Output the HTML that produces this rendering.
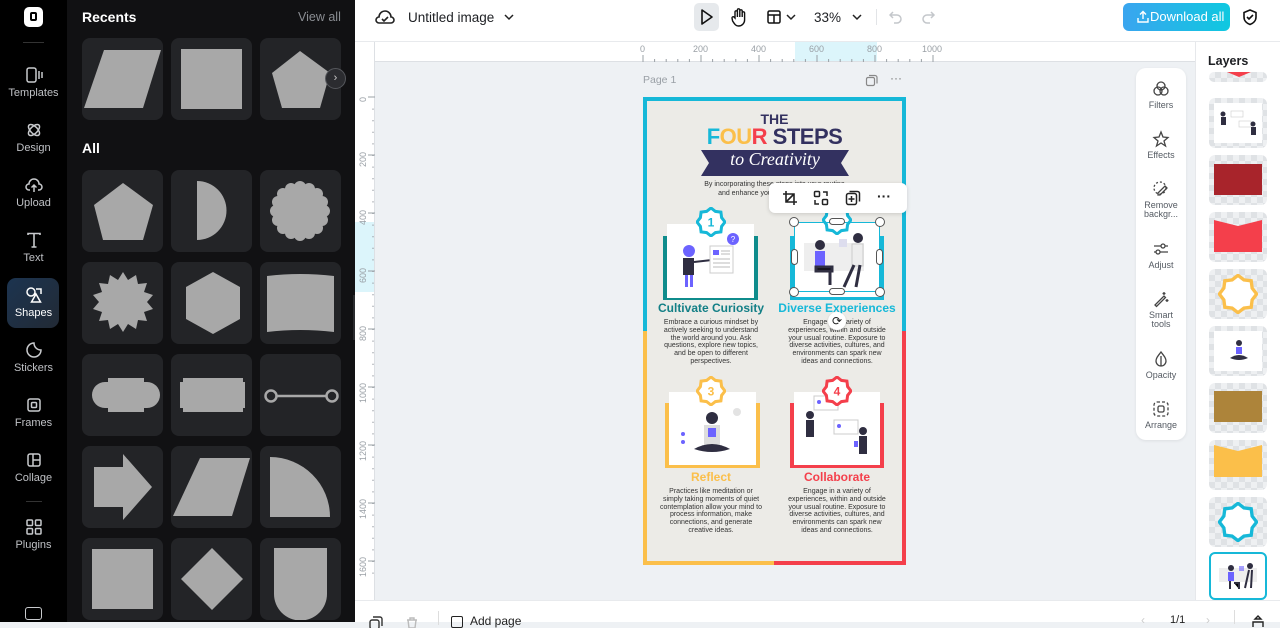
<!DOCTYPE html>
<html><head><meta charset="utf-8">
<style>
*{box-sizing:border-box;margin:0;padding:0}
body{width:1280px;height:622px;overflow:hidden;position:relative;font-family:"Liberation Sans",sans-serif;background:#eef1f4}
.abs{position:absolute}
#rail{left:0;top:0;width:67px;height:622px;background:#000}
.ri{position:absolute;left:0;width:67px;text-align:center;color:#bfc1c5;font-size:11px}
.ri svg{display:block;margin:0 auto 3px}
#panel{left:67px;top:0;width:288px;height:622px;background:#111113}
.tile{position:absolute;width:81px;height:82px;background:#232427;border-radius:8px}
.tile svg{position:absolute;left:0;top:0}
#top{left:355px;top:0;width:925px;height:42px;background:#fff;border-bottom:1px solid #e8eaed}
#hr{left:375px;top:42px;width:820px;height:20px;background:#fff;border-bottom:1px solid #dde0e4}
#vr{left:355px;top:42px;width:20px;height:558px;background:#fff;border-right:1px solid #dde0e4}
.lbl{position:absolute;font-size:9px;color:#9aa0a6}
#tools{left:1136px;top:68px;width:50px;height:372px;background:#fff;border-radius:10px;box-shadow:0 1px 3px rgba(0,0,0,.08)}
.tl{position:absolute;left:0;width:50px;text-align:center;font-size:9px;color:#555b63;line-height:9px}
.tl svg{display:block;margin:0 auto 3px}
#layers{left:1195px;top:42px;width:85px;height:558px;background:#fff;border-left:1px solid #e6e8eb}
.lay{position:absolute;left:13px;width:58px;height:50px;border-radius:6px;background:#e9ecef;overflow:hidden}
.chk{background-color:#eef0f2;background-image:linear-gradient(45deg,#dfe2e5 25%,transparent 25%,transparent 75%,#dfe2e5 75%),linear-gradient(45deg,#dfe2e5 25%,transparent 25%,transparent 75%,#dfe2e5 75%);background-size:12px 12px;background-position:0 0,6px 6px}
#bot{left:355px;top:600px;width:925px;height:22px;background:#fff;border-top:1px solid #e8eaed}
.pg{font-family:"Liberation Sans",sans-serif}
.body{position:absolute;font-size:7px;line-height:7.8px;color:#333;text-align:center;width:104px}
.ttl{position:absolute;font-weight:bold;font-size:12px;text-align:center;width:130px}
</style></head><body>

<div id="rail" class="abs">
  <div class="abs" style="left:24px;top:7px;width:19px;height:20px;background:#fff;border-radius:5px"><div style="position:absolute;left:6px;top:5px;width:7px;height:9px;border:2px solid #000;border-radius:2px"></div></div>
  <div class="abs" style="left:23px;top:42px;width:21px;height:1px;background:#333"></div>
  <div class="ri" style="top:66px"><svg width="18" height="18" viewBox="0 0 18 18" fill="none" stroke="#c8cacd" stroke-width="1.5"><rect x="2" y="2" width="9" height="14" rx="2"/><path d="M14 5v8M17 6v6"/></svg>Templates</div>
  <div class="ri" style="top:121px"><svg width="18" height="18" viewBox="0 0 18 18" fill="none" stroke="#c8cacd" stroke-width="1.5"><ellipse cx="9" cy="9" rx="7" ry="3.5" transform="rotate(45 9 9)"/><ellipse cx="9" cy="9" rx="7" ry="3.5" transform="rotate(-45 9 9)"/></svg>Design</div>
  <div class="ri" style="top:176px"><svg width="18" height="18" viewBox="0 0 18 18" fill="none" stroke="#c8cacd" stroke-width="1.5"><path d="M5 14H4a3 3 0 0 1 0-6 5 5 0 0 1 10 0 3 3 0 0 1 0 6h-1M9 16V9M6.5 11.5 9 9l2.5 2.5"/></svg>Upload</div>
  <div class="ri" style="top:231px"><svg width="18" height="18" viewBox="0 0 18 18" fill="none" stroke="#c8cacd" stroke-width="1.6"><path d="M3 4V2.5h12V4M9 2.5V16M6.5 16h5"/></svg>Text</div>
  <div class="abs" style="left:7px;top:278px;width:52px;height:50px;border-radius:9px;background:linear-gradient(135deg,#1c3450,#222a35)"></div>
  <div class="ri" style="top:286px;color:#fff"><svg width="18" height="18" viewBox="0 0 18 18" fill="none" stroke="#fff" stroke-width="1.5"><circle cx="6" cy="6" r="4"/><path d="M11 3h5v5M11 8l-4.5 8h9z"/></svg>Shapes</div>
  <div class="ri" style="top:341px"><svg width="18" height="18" viewBox="0 0 18 18" fill="none" stroke="#c8cacd" stroke-width="1.5"><path d="M16 9a7 7 0 1 1-7-7c0 4 3 7 7 7z"/></svg>Stickers</div>
  <div class="ri" style="top:396px"><svg width="18" height="18" viewBox="0 0 18 18" fill="none" stroke="#c8cacd" stroke-width="1.5"><rect x="3" y="3" width="12" height="12" rx="2"/><rect x="6.5" y="6.5" width="5" height="5" rx="1"/></svg>Frames</div>
  <div class="ri" style="top:451px"><svg width="18" height="18" viewBox="0 0 18 18" fill="none" stroke="#c8cacd" stroke-width="1.5"><rect x="3" y="3" width="12" height="12" rx="2"/><path d="M8 3v12M8 9h7"/></svg>Collage</div>
  <div class="abs" style="left:26px;top:501px;width:16px;height:1px;background:#333"></div>
  <div class="ri" style="top:518px"><svg width="18" height="18" viewBox="0 0 18 18" fill="none" stroke="#c8cacd" stroke-width="1.5"><rect x="2" y="2" width="5.5" height="5.5" rx="1"/><rect x="10.5" y="2" width="5.5" height="5.5" rx="1"/><rect x="2" y="10.5" width="5.5" height="5.5" rx="1"/><rect x="10.5" y="10.5" width="5.5" height="5.5" rx="1"/></svg>Plugins</div>
  <div class="abs" style="left:25px;top:607px;width:17px;height:13px;border:1.5px solid #c8cacd;border-radius:3px"></div>
</div>

<div id="panel" class="abs">
  <div class="abs" style="left:15px;top:9px;color:#fff;font-weight:bold;font-size:14px">Recents</div>
  <div class="abs" style="left:231px;top:10px;color:#8a8d92;font-size:12.5px">View all</div>
  <div class="abs" style="left:15px;top:140px;color:#fff;font-weight:bold;font-size:14px">All</div>
</div>
<div class="tile" style="left:82px;top:38px"><svg width="81" height="82"><polygon points="22,12 79,12 61,70 2,70" fill="#a8a8a8"/></svg></div>
<div class="tile" style="left:171px;top:38px"><svg width="81" height="82"><rect x="10" y="11" width="61" height="60" fill="#a8a8a8"/></svg></div>
<div class="tile" style="left:260px;top:38px"><svg width="81" height="82"><polygon points="40,13 70,35 60,70 22,70 12,35" fill="#a8a8a8"/></svg></div>
<div class="abs" style="left:325px;top:68px;width:21px;height:21px;border-radius:50%;background:#2b2c30;border:1px solid #55575c;color:#ccc;font-size:11px;text-align:center;line-height:19px">&#8250;</div>

<div class="tile" style="left:82px;top:170px"><svg width="81" height="82"><polygon points="41,13 71,35 61,70 21,70 12,35" fill="#a8a8a8"/></svg></div>
<div class="tile" style="left:171px;top:170px"><svg width="81" height="82"><path d="M26 11a29 29 0 0 1 0 59z" fill="#a8a8a8"/></svg></div>
<div class="tile" style="left:260px;top:170px"><svg width="81" height="82"><g fill="#a8a8a8"><circle cx="40" cy="41" r="24"/><circle cx="40" cy="17" r="6"/><circle cx="40" cy="65" r="6"/><circle cx="16" cy="41" r="6"/><circle cx="64" cy="41" r="6"/><circle cx="57" cy="24" r="6"/><circle cx="23" cy="24" r="6"/><circle cx="57" cy="58" r="6"/><circle cx="23" cy="58" r="6"/><circle cx="49" cy="19" r="6"/><circle cx="31" cy="19" r="6"/><circle cx="49" cy="63" r="6"/><circle cx="31" cy="63" r="6"/><circle cx="18" cy="32" r="6"/><circle cx="62" cy="32" r="6"/><circle cx="18" cy="50" r="6"/><circle cx="62" cy="50" r="6"/></g></svg></div>

<div class="tile" style="left:82px;top:262px"><svg width="81" height="82"><polygon points="41,10 46,18 54,13 56,22 65,21 62,30 71,33 65,40 71,47 62,50 65,59 56,58 54,67 46,62 41,70 36,62 28,67 26,58 17,59 20,50 11,47 17,40 11,33 20,30 17,21 26,22 28,13 36,18" fill="#a8a8a8"/></svg></div>
<div class="tile" style="left:171px;top:262px"><svg width="81" height="82"><polygon points="42,10 69,25 69,57 42,72 15,57 15,25" fill="#a8a8a8"/></svg></div>
<div class="tile" style="left:260px;top:262px"><svg width="81" height="82"><path d="M7 14 Q40 10 74 14 V70 Q40 66 7 70z" fill="#a8a8a8"/></svg></div>

<div class="tile" style="left:82px;top:354px"><svg width="81" height="82"><path d="M26 24h36v4h3a13 13 0 0 1 0 26h-3v4H26v-4h-3a13 13 0 0 1 0-26h3z" fill="#a8a8a8"/></svg></div>
<div class="tile" style="left:171px;top:354px"><svg width="81" height="82"><path d="M12 24h60v4h2v26h-2v4H12v-4h-3V28h3z" fill="#a8a8a8"/></svg></div>
<div class="tile" style="left:260px;top:354px"><svg width="81" height="82"><g fill="none" stroke="#a8a8a8" stroke-width="2.5"><circle cx="11" cy="42" r="5.5"/><circle cx="72" cy="42" r="5.5"/><path d="M16.5 42h50"/></g></svg></div>

<div class="tile" style="left:82px;top:446px"><svg width="81" height="82"><polygon points="12,21 41,21 41,8 70,41 41,74 41,61 12,61" fill="#a8a8a8"/></svg></div>
<div class="tile" style="left:171px;top:446px"><svg width="81" height="82"><polygon points="29,12 79,12 61,70 2,70" fill="#a8a8a8"/></svg></div>
<div class="tile" style="left:260px;top:446px"><svg width="81" height="82"><path d="M10 11a60 60 0 0 1 60 60H10z" fill="#a8a8a8"/></svg></div>

<div class="tile" style="left:82px;top:538px"><svg width="81" height="82"><rect x="10" y="11" width="61" height="60" fill="#a8a8a8"/></svg></div>
<div class="tile" style="left:171px;top:538px"><svg width="81" height="82"><polygon points="41,10 72,41 41,72 10,41" fill="#a8a8a8"/></svg></div>
<div class="tile" style="left:260px;top:538px"><svg width="81" height="82"><path d="M14 10h53v46a26.5 26.5 0 0 1-53 0z" fill="#a8a8a8"/></svg></div>
<div class="abs" style="left:353px;top:295px;width:8px;height:45px;background:#2a2b2e;border-radius:0 4px 4px 0"></div>

<div id="top" class="abs">
  <svg class="abs" style="left:20px;top:8px" width="20" height="18" viewBox="0 0 20 18" fill="none" stroke="#222" stroke-width="1.6"><path d="M5 15H4a3 3 0 0 1 0-6 6 6 0 0 1 12 0 3 3 0 0 1 0 6H5z"/><path d="M7 11l2 2 4-4"/></svg>
  <div class="abs" style="left:53px;top:10px;font-size:13.5px;color:#1d1f23">Untitled image</div>
  <svg class="abs" style="left:148px;top:12px" width="12" height="10"><path d="M2 3l4 4 4-4" fill="none" stroke="#222" stroke-width="1.5"/></svg>
  <div class="abs" style="left:339px;top:3px;width:25px;height:28px;background:#e6e9ec;border-radius:5px"></div>
  <svg class="abs" style="left:345px;top:8px" width="14" height="18"><path d="M2 2l10 7-10 7z" fill="none" stroke="#111" stroke-width="1.6" stroke-linejoin="round"/></svg>
  <svg class="abs" style="left:375px;top:7px" width="18" height="20" viewBox="0 0 18 20" fill="none" stroke="#111" stroke-width="1.4"><path d="M5 11V5a1.2 1.2 0 0 1 2.4 0v5V3a1.2 1.2 0 0 1 2.4 0v7V4a1.2 1.2 0 0 1 2.4 0v6-4a1.2 1.2 0 0 1 2.4 0v7a6 6 0 0 1-6 6c-3 0-4-2-6-5L2 11a1.2 1.2 0 0 1 2-1z"/></svg>
  <svg class="abs" style="left:411px;top:9px" width="16" height="16" fill="none" stroke="#111" stroke-width="1.5"><rect x="2" y="2" width="12" height="12" rx="1.5"/><path d="M2 6h12M8 6v8"/></svg>
  <svg class="abs" style="left:430px;top:12px" width="12" height="10"><path d="M2 3l4 4 4-4" fill="none" stroke="#222" stroke-width="1.5"/></svg>
  <div class="abs" style="left:459px;top:10px;font-size:13.5px;color:#1d1f23">33%</div>
  <svg class="abs" style="left:496px;top:12px" width="12" height="10"><path d="M2 3l4 4 4-4" fill="none" stroke="#222" stroke-width="1.5"/></svg>
  <div class="abs" style="left:521px;top:9px;width:1px;height:16px;background:#e2e4e7"></div>
  <svg class="abs" style="left:533px;top:9px" width="16" height="16" fill="none" stroke="#c4c7cb" stroke-width="1.5"><path d="M5 3L2 6l3 3M2 6h7a4 4 0 0 1 0 8H6"/></svg>
  <svg class="abs" style="left:565px;top:9px" width="16" height="16" fill="none" stroke="#c4c7cb" stroke-width="1.5"><path d="M11 3l3 3-3 3M14 6H7a4 4 0 0 0 0 8h3"/></svg>
  <div class="abs" style="left:768px;top:3px;width:107px;height:28px;border-radius:6px;background:linear-gradient(90deg,#3aa5ef,#0fc8e0);color:#fff;font-size:13px;line-height:28px;padding-left:27px">Download all</div>
  <svg class="abs" style="left:781px;top:10px" width="14" height="14" fill="none" stroke="#fff" stroke-width="1.4"><path d="M7 9V2M4 4.5 7 1.5l3 3M2 8v4h10V8"/></svg>
  <svg class="abs" style="left:886px;top:8px" width="18" height="18" fill="none" stroke="#111" stroke-width="1.6"><path d="M9 2l6 2.5v4.5c0 4-3 6.5-6 7.5-3-1-6-3.5-6-7.5V4.5z"/><path d="M6 9l2 2 4-4"/></svg>
</div>

<div id="hr" class="abs">
  <div class="abs" style="left:420px;top:0;width:82px;height:19px;background:#dcf5fb"></div>
  <svg class="abs" style="left:0;top:0" width="820" height="20"><g stroke="#9aa0a6" stroke-width="1">
  <path d="M268 13v7M326 13v7M384 13v7M442 13v7M500 13v7M558 13v7"/>
  <path d="M279.6 17v3M291.2 17v3M302.8 17v3M314.4 17v3M337.6 17v3M349.2 17v3M360.8 17v3M372.4 17v3M395.6 17v3M407.2 17v3M418.8 17v3M430.4 17v3M453.6 17v3M465.2 17v3M476.8 17v3M488.4 17v3M511.6 17v3M523.2 17v3M534.8 17v3M546.4 17v3"/></g></svg>
  <div class="lbl" style="left:265px;top:2px">0</div><div class="lbl" style="left:318px;top:2px">200</div><div class="lbl" style="left:376px;top:2px">400</div><div class="lbl" style="left:434px;top:2px">600</div><div class="lbl" style="left:492px;top:2px">800</div><div class="lbl" style="left:547px;top:2px">1000</div>
</div>
<div id="vr" class="abs">
  <div class="abs" style="left:0;top:180px;width:19px;height:70px;background:#dcf5fb"></div>
  <svg class="abs" style="left:0;top:0" width="20" height="558"><g stroke="#9aa0a6"><path d="M13 55h7M13 113h7M13 171h7M13 229h7M13 287h7M13 345h7M13 403h7M13 461h7M13 519h7"/></g><g stroke="#9aa0a6" stroke-dasharray="1 10.6"><path d="M18 66.6V540" stroke-width="1.5"/></g></svg>
  <div class="lbl" style="left:3px;top:60px;transform:rotate(-90deg);transform-origin:0 0">0</div>
  <div class="lbl" style="left:3px;top:125px;transform:rotate(-90deg);transform-origin:0 0">200</div>
  <div class="lbl" style="left:3px;top:183px;transform:rotate(-90deg);transform-origin:0 0">400</div>
  <div class="lbl" style="left:3px;top:241px;transform:rotate(-90deg);transform-origin:0 0">600</div>
  <div class="lbl" style="left:3px;top:299px;transform:rotate(-90deg);transform-origin:0 0">800</div>
  <div class="lbl" style="left:3px;top:361px;transform:rotate(-90deg);transform-origin:0 0">1000</div>
  <div class="lbl" style="left:3px;top:419px;transform:rotate(-90deg);transform-origin:0 0">1200</div>
  <div class="lbl" style="left:3px;top:477px;transform:rotate(-90deg);transform-origin:0 0">1400</div>
  <div class="lbl" style="left:3px;top:535px;transform:rotate(-90deg);transform-origin:0 0">1600</div>
</div>

<div class="abs" style="left:643px;top:74px;font-size:10.5px;color:#9aa0a6">Page 1</div>
<svg class="abs" style="left:865px;top:74px" width="13" height="13" fill="none" stroke="#888" stroke-width="1.2"><rect x="1.5" y="3.5" width="8" height="8" rx="1.5"/><path d="M4 1.5h6a2 2 0 0 1 2 2v6"/></svg>
<div class="abs" style="left:890px;top:71px;font-size:12px;color:#777">&middot;&middot;&middot;</div>

<div class="abs pg" style="left:643px;top:97px;width:263px;height:468px;background:#ecebe7;overflow:hidden">
  <div class="abs" style="left:0;top:0;width:263px;height:234px;border:4px solid #16b8d8;border-bottom:none"></div>
  <div class="abs" style="left:0;top:234px;width:131px;height:234px;border:4px solid #fbbf4a;border-top:none;border-right:none"></div>
  <div class="abs" style="left:131px;top:234px;width:132px;height:234px;border:4px solid #f43f4b;border-top:none;border-left:none"></div>
  <div class="abs" style="left:0;top:14px;width:263px;text-align:center;font-weight:bold;font-size:14px;color:#333160">THE</div>
  <div class="abs" style="left:0;top:27px;width:263px;text-align:center;font-weight:bold;font-size:22px;letter-spacing:-0.5px;color:#333160"><span style="color:#16b8d8">F</span><span style="color:#fbbf4a">O</span><span style="color:#fbbf4a">U</span><span style="color:#f43f4b">R</span> STEPS</div>
  <svg class="abs" style="left:58px;top:52px" width="148" height="28"><polygon points="0,1 148,1 140,14 148,27 0,27 8,14" fill="#333160"/></svg>
  <div class="abs" style="left:58px;top:52px;width:148px;text-align:center;font-family:'Liberation Serif',serif;font-style:italic;font-size:18px;color:#fff">to Creativity</div>
  <div class="abs" style="left:20px;top:84px;width:223px;text-align:center;font-size:7px;line-height:8.5px;color:#333">By incorporating these steps into your routine<br>and enhance your creative potential.</div>

  <div class="abs" style="left:20px;top:139px;width:95px;height:64px;background:#0f8c8c"></div>
  <div class="abs" style="left:24px;top:127px;width:87px;height:74px;background:#fff"></div>
  <div class="abs" style="left:147px;top:139px;width:94px;height:64px;background:#16b8d8"></div>
  <div class="abs" style="left:151px;top:126px;width:86px;height:74px;background:#fff"></div>
  <div class="abs" style="left:22px;top:306px;width:95px;height:65px;background:#fbbf4a"></div>
  <div class="abs" style="left:26px;top:295px;width:87px;height:73px;background:#fff"></div>
  <div class="abs" style="left:147px;top:306px;width:94px;height:65px;background:#f43f4b"></div>
  <div class="abs" style="left:151px;top:295px;width:86px;height:73px;background:#fff"></div>
  <svg class="abs" style="left:24px;top:127px" width="87" height="74"><circle cx="22" cy="27" r="6" fill="#6c63ff"/><path d="M16 34h11v17H16z" fill="#2f2e41"/><path d="M18 51h3v12h-3zM23 51h3v12h-3z" fill="#6c63ff"/><path d="M27 38l18-2" stroke="#2f2e41" stroke-width="2"/><rect x="43" y="22" width="23" height="27" fill="#fff" stroke="#ccc"/><rect x="46" y="26" width="6" height="5" fill="#6c63ff"/><path d="M54 27h9M54 30h9M46 35h17M46 39h17M46 43h17" stroke="#bbb"/><circle cx="66" cy="15" r="6" fill="#6c63ff"/><text x="66" y="18" font-size="8" fill="#fff" text-anchor="middle" font-family="Liberation Sans">?</text></svg>
  <svg class="abs" style="left:151px;top:126px" width="86" height="74"><rect x="10" y="20" width="60" height="28" fill="#eee"/><circle cx="26" cy="22" r="5" fill="#2f2e41"/><path d="M21 28h10v16H21z" fill="#6c63ff"/><path d="M22 44h16v4H22zM36 48v14" stroke="#2f2e41" stroke-width="3"/><circle cx="64" cy="15" r="5" fill="#2f2e41"/><path d="M58 21h11v22H58z" fill="#eee" stroke="#ccc"/><path d="M60 42l-10 22M66 42l-4 22" stroke="#2f2e41" stroke-width="3"/><rect x="45" y="16" width="8" height="8" fill="#dde"/></svg>
  <svg class="abs" style="left:26px;top:295px" width="87" height="73"><circle cx="43" cy="26" r="6" fill="#2f2e41"/><path d="M35 33h16v20H35z" fill="#ddd"/><rect x="39" y="36" width="8" height="9" fill="#6c63ff"/><path d="M25 57q18-10 36 0q-18 6-36 0z" fill="#2f2e41"/><circle cx="68" cy="20" r="4" fill="#e3e3e3"/><circle cx="14" cy="42" r="2" fill="#6c63ff"/><circle cx="14" cy="50" r="2" fill="#6c63ff"/></svg>
  <svg class="abs" style="left:151px;top:295px" width="86" height="73"><rect x="20" y="4" width="24" height="14" fill="#fff" stroke="#ccc"/><circle cx="25" cy="10" r="2" fill="#6c63ff"/><rect x="40" y="28" width="24" height="14" fill="#fff" stroke="#ccc"/><circle cx="45" cy="34" r="2" fill="#6c63ff"/><circle cx="16" cy="23" r="4" fill="#2f2e41"/><path d="M12 28h8v17h-8z" fill="#2f2e41"/><circle cx="69" cy="39" r="4" fill="#2f2e41"/><path d="M65 44h8v18h-8z" fill="#2f2e41"/><rect x="60" y="49" width="4" height="6" fill="#6c63ff"/></svg>
  <svg class="abs" style="left:53px;top:110px" width="30" height="30"><polygon points="29,15 25.6,19.4 24.9,24.9 19.4,25.6 15,29 10.6,25.6 5.1,24.9 4.4,19.4 1,15 4.4,10.6 5.1,5.1 10.6,4.4 15,1 19.4,4.4 24.9,5.1 25.6,10.6" fill="#fff" stroke="#16b8d8" stroke-width="3"/><text x="15" y="19.5" font-size="12" font-weight="bold" fill="#16b8d8" text-anchor="middle" font-family="Liberation Sans">1</text></svg>
  <svg class="abs" style="left:179px;top:108px" width="30" height="30"><polygon points="29,15 25.6,19.4 24.9,24.9 19.4,25.6 15,29 10.6,25.6 5.1,24.9 4.4,19.4 1,15 4.4,10.6 5.1,5.1 10.6,4.4 15,1 19.4,4.4 24.9,5.1 25.6,10.6" fill="#fff" stroke="#16b8d8" stroke-width="3"/></svg>
  <svg class="abs" style="left:53px;top:279px" width="30" height="30"><polygon points="29,15 25.6,19.4 24.9,24.9 19.4,25.6 15,29 10.6,25.6 5.1,24.9 4.4,19.4 1,15 4.4,10.6 5.1,5.1 10.6,4.4 15,1 19.4,4.4 24.9,5.1 25.6,10.6" fill="#fff" stroke="#fbbf4a" stroke-width="3"/><text x="15" y="19.5" font-size="12" font-weight="bold" fill="#fbbf4a" text-anchor="middle" font-family="Liberation Sans">3</text></svg>
  <svg class="abs" style="left:179px;top:279px" width="30" height="30"><polygon points="29,15 25.6,19.4 24.9,24.9 19.4,25.6 15,29 10.6,25.6 5.1,24.9 4.4,19.4 1,15 4.4,10.6 5.1,5.1 10.6,4.4 15,1 19.4,4.4 24.9,5.1 25.6,10.6" fill="#fff" stroke="#f43f4b" stroke-width="3"/><text x="15" y="19.5" font-size="12" font-weight="bold" fill="#f43f4b" text-anchor="middle" font-family="Liberation Sans">4</text></svg>

  <div class="ttl" style="left:3px;top:204px;color:#137f86">Cultivate Curiosity</div>
  <div class="ttl" style="left:129px;top:204px;color:#16b8d8">Diverse Experiences</div>
  <div class="ttl" style="left:3px;top:373px;color:#fbbf4a">Reflect</div>
  <div class="ttl" style="left:129px;top:373px;color:#f43f4b">Collaborate</div>
  <div class="body" style="left:16px;top:222px">Embrace a curious mindset by actively seeking to understand the world around you. Ask questions, explore new topics, and be open to different perspectives.</div>
  <div class="body" style="left:142px;top:222px">Engage in a variety of experiences, within and outside your usual routine. Exposure to diverse activities, cultures, and environments can spark new ideas and connections.</div>
  <div class="body" style="left:16px;top:391px">Practices like meditation or simply taking moments of quiet contemplation allow your mind to process information, make connections, and generate creative ideas.</div>
  <div class="body" style="left:142px;top:391px">Engage in a variety of experiences, within and outside your usual routine. Exposure to diverse activities, cultures, and environments can spark new ideas and connections.</div>
</div>

<div class="abs" style="left:794px;top:222px;width:86px;height:70px;border:1.5px solid #16b8d8"></div>
<div class="abs" style="left:789px;top:217px;width:10px;height:10px;border-radius:50%;background:#fff;border:1px solid #555"></div>
<div class="abs" style="left:875px;top:217px;width:10px;height:10px;border-radius:50%;background:#fff;border:1px solid #555"></div>
<div class="abs" style="left:789px;top:287px;width:10px;height:10px;border-radius:50%;background:#fff;border:1px solid #555"></div>
<div class="abs" style="left:875px;top:287px;width:10px;height:10px;border-radius:50%;background:#fff;border:1px solid #555"></div>
<div class="abs" style="left:829px;top:218px;width:16px;height:7px;border-radius:4px;background:#fff;border:1px solid #555"></div>
<div class="abs" style="left:829px;top:288px;width:16px;height:7px;border-radius:4px;background:#fff;border:1px solid #555"></div>
<div class="abs" style="left:791px;top:249px;width:7px;height:16px;border-radius:4px;background:#fff;border:1px solid #555"></div>
<div class="abs" style="left:876px;top:249px;width:7px;height:16px;border-radius:4px;background:#fff;border:1px solid #555"></div>
<div class="abs" style="left:828px;top:312px;width:18px;height:18px;border-radius:50%;background:#fff;box-shadow:0 1px 2px rgba(0,0,0,.2);text-align:center;font-size:12px;line-height:18px;color:#222">&#10227;</div>

<div class="abs" style="left:769px;top:183px;width:138px;height:30px;background:#fff;border-radius:6px;box-shadow:0 1px 4px rgba(0,0,0,.15)">
  <svg class="abs" style="left:13px;top:7px" width="16" height="16" fill="none" stroke="#222" stroke-width="1.6"><path d="M4 1v11h11M1 4h11v11M4 12l8-8"/></svg>
  <svg class="abs" style="left:44px;top:7px" width="16" height="16" fill="none" stroke="#222" stroke-width="1.5"><rect x="1.5" y="1.5" width="5" height="5" rx="1"/><rect x="9.5" y="9.5" width="5" height="5" rx="1"/><path d="M10 2h4v4M2 10v4h4"/></svg>
  <svg class="abs" style="left:76px;top:7px" width="16" height="16" fill="none" stroke="#222" stroke-width="1.5"><rect x="1.5" y="3.5" width="10" height="11" rx="2"/><path d="M4.5 1.5h8a2 2 0 0 1 2 2v8M6.5 6v6M3.5 9h6"/></svg>
  <div class="abs" style="left:108px;top:5px;font-size:14px;color:#222;font-weight:bold">&middot;&middot;&middot;</div>
</div>

<div id="tools" class="abs">
  <div class="tl" style="top:12px"><svg width="18" height="18" fill="none" stroke="#444" stroke-width="1.3"><circle cx="9" cy="6" r="4"/><circle cx="6" cy="11" r="4"/><circle cx="12" cy="11" r="4"/></svg>Filters</div>
  <div class="tl" style="top:62px"><svg width="18" height="18" fill="none" stroke="#444" stroke-width="1.3"><path d="M9 2l2 5 5 .5-4 3.5 1.5 5L9 13l-4.5 3 1.5-5-4-3.5 5-.5z"/></svg>Effects</div>
  <div class="tl" style="top:112px"><svg width="18" height="18" fill="none" stroke="#444" stroke-width="1.3"><circle cx="8" cy="8" r="6" stroke-dasharray="2 2"/><path d="M6 13l7-7 2 2-7 7h-2z"/></svg>Remove<br>backgr...</div>
  <div class="tl" style="top:172px"><svg width="18" height="18" fill="none" stroke="#444" stroke-width="1.3"><path d="M2 6h14M2 12h14"/><circle cx="11" cy="6" r="2" fill="#fff"/><circle cx="6" cy="12" r="2" fill="#fff"/></svg>Adjust</div>
  <div class="tl" style="top:222px"><svg width="18" height="18" fill="none" stroke="#444" stroke-width="1.3"><path d="M3 15l9-9 1.5 1.5-9 9zM12 2v3M10.5 3.5h3M15 9v3M13.5 10.5h3"/></svg>Smart<br>tools</div>
  <div class="tl" style="top:282px"><svg width="18" height="18" fill="none" stroke="#444" stroke-width="1.3"><path d="M9 2c3 4 5 6 5 9a5 5 0 0 1-10 0c0-3 2-5 5-9zM9 6v10"/></svg>Opacity</div>
  <div class="tl" style="top:332px"><svg width="18" height="18" fill="none" stroke="#444" stroke-width="1.3"><rect x="2" y="2" width="14" height="14" rx="3" stroke-dasharray="3 2"/><rect x="6" y="6" width="6" height="6" rx="1.5"/></svg>Arrange</div>
</div>

<div id="layers" class="abs">
  <div class="abs" style="left:12px;top:12px;font-weight:bold;font-size:12.5px;color:#1d1f23">Layers</div>
  <div class="lay chk" style="top:30px;height:10px"><div style="position:absolute;left:18px;top:0;width:0;height:0;border-left:12px solid transparent;border-right:12px solid transparent;border-top:5px solid #f43f4b"></div></div>
  <div class="lay chk" style="top:56px"><div style="position:absolute;left:5px;top:5px;width:48px;height:40px;background:#fff"></div><svg style="position:absolute;left:8px;top:10px" width="42" height="30"><circle cx="6" cy="6" r="2.5" fill="#2f2e41"/><rect x="4" y="9" width="5" height="8" fill="#2f2e41"/><rect x="14" y="3" width="12" height="6" fill="#fff" stroke="#ccc" stroke-width=".6"/><rect x="22" y="13" width="12" height="6" fill="#fff" stroke="#ccc" stroke-width=".6"/><circle cx="36" cy="16" r="2.5" fill="#2f2e41"/><rect x="34" y="19" width="5" height="8" fill="#2f2e41"/></svg></div>
  <div class="lay chk" style="top:113px"><div style="position:absolute;left:5px;top:9px;width:48px;height:31px;background:#a8242b"></div></div>
  <div class="lay chk" style="top:170px"><svg style="position:absolute;left:5px;top:8px" width="48" height="32"><polygon points="0,0 24,6 48,0 48,32 0,32" fill="#f43f4b"/></svg></div>
  <div class="lay chk" style="top:227px"><svg style="position:absolute;left:9px;top:5px" width="40" height="40" viewBox="0 0 30 30"><polygon points="29,15 25.6,19.4 24.9,24.9 19.4,25.6 15,29 10.6,25.6 5.1,24.9 4.4,19.4 1,15 4.4,10.6 5.1,5.1 10.6,4.4 15,1 19.4,4.4 24.9,5.1 25.6,10.6" fill="#fff" stroke="#fbbf4a" stroke-width="2.5"/></svg></div>
  <div class="lay chk" style="top:284px"><div style="position:absolute;left:5px;top:5px;width:48px;height:40px;background:#fff"></div><svg style="position:absolute;left:18px;top:12px" width="24" height="26"><circle cx="12" cy="5" r="3" fill="#2f2e41"/><rect x="9" y="9" width="6" height="7" fill="#6c63ff"/><path d="M3 20q9-6 18 0q-9 4-18 0z" fill="#2f2e41"/></svg></div>
  <div class="lay chk" style="top:341px"><div style="position:absolute;left:5px;top:8px;width:48px;height:31px;background:#ad843a"></div></div>
  <div class="lay chk" style="top:398px"><svg style="position:absolute;left:5px;top:5px" width="48" height="32"><polygon points="0,0 24,6 48,0 48,32 0,32" fill="#fbbf4a"/></svg></div>
  <div class="lay chk" style="top:455px"><svg style="position:absolute;left:9px;top:5px" width="40" height="40" viewBox="0 0 30 30"><polygon points="29,15 25.6,19.4 24.9,24.9 19.4,25.6 15,29 10.6,25.6 5.1,24.9 4.4,19.4 1,15 4.4,10.6 5.1,5.1 10.6,4.4 15,1 19.4,4.4 24.9,5.1 25.6,10.6" fill="#fff" stroke="#16b8d8" stroke-width="2.5"/></svg></div>
  <div class="lay" style="top:510px;border:2px solid #16b8d8;background:#fff;height:48px;left:13px;width:58px"><svg style="position:absolute;left:6px;top:6px" width="44" height="32"><rect x="2" y="8" width="38" height="14" fill="#eee"/><circle cx="14" cy="8" r="3" fill="#2f2e41"/><rect x="11" y="12" width="6" height="9" fill="#6c63ff"/><path d="M13 21v8M17 23h5v6" stroke="#2f2e41" stroke-width="2"/><circle cx="33" cy="6" r="3" fill="#2f2e41"/><path d="M32 10l-4 18M35 10l-1 18" stroke="#2f2e41" stroke-width="2"/><rect x="22" y="6" width="5" height="5" fill="#6c63ff" opacity=".6"/></svg></div>
</div>

<div id="bot" class="abs">
  <svg class="abs" style="left:14px;top:15px" width="14" height="12" fill="none" stroke="#333" stroke-width="1.4"><rect x="1" y="4" width="9" height="9" rx="2"/><path d="M4 1h7a2 2 0 0 1 2 2v7"/></svg>
  <svg class="abs" style="left:50px;top:15px" width="14" height="12" fill="none" stroke="#bbb" stroke-width="1.4"><path d="M2 4h10M5 4V2h4v2M3 4l1 8h6l1-8"/></svg>
  <div class="abs" style="left:83px;top:10px;width:1px;height:14px;background:#ddd"></div>
  <div class="abs" style="left:96px;top:15px;width:12px;height:12px;border:1.5px solid #222;border-radius:2px"></div>
  <div class="abs" style="left:115px;top:13px;font-size:12px;color:#222">Add page</div>
  <div class="abs" style="left:786px;top:12px;font-size:12px;color:#ccc">&lsaquo;</div>
  <div class="abs" style="left:815px;top:13px;font-size:11px;color:#222">1/1</div>
  <div class="abs" style="left:851px;top:12px;font-size:12px;color:#ccc">&rsaquo;</div>
  <div class="abs" style="left:879px;top:9px;width:1px;height:14px;background:#ddd"></div>
  <svg class="abs" style="left:896px;top:14px" width="14" height="12" fill="none" stroke="#222" stroke-width="1.4"><path d="M7 1l3 3H4zM2 7h10v6H2z"/></svg>
</div>
</body></html>
